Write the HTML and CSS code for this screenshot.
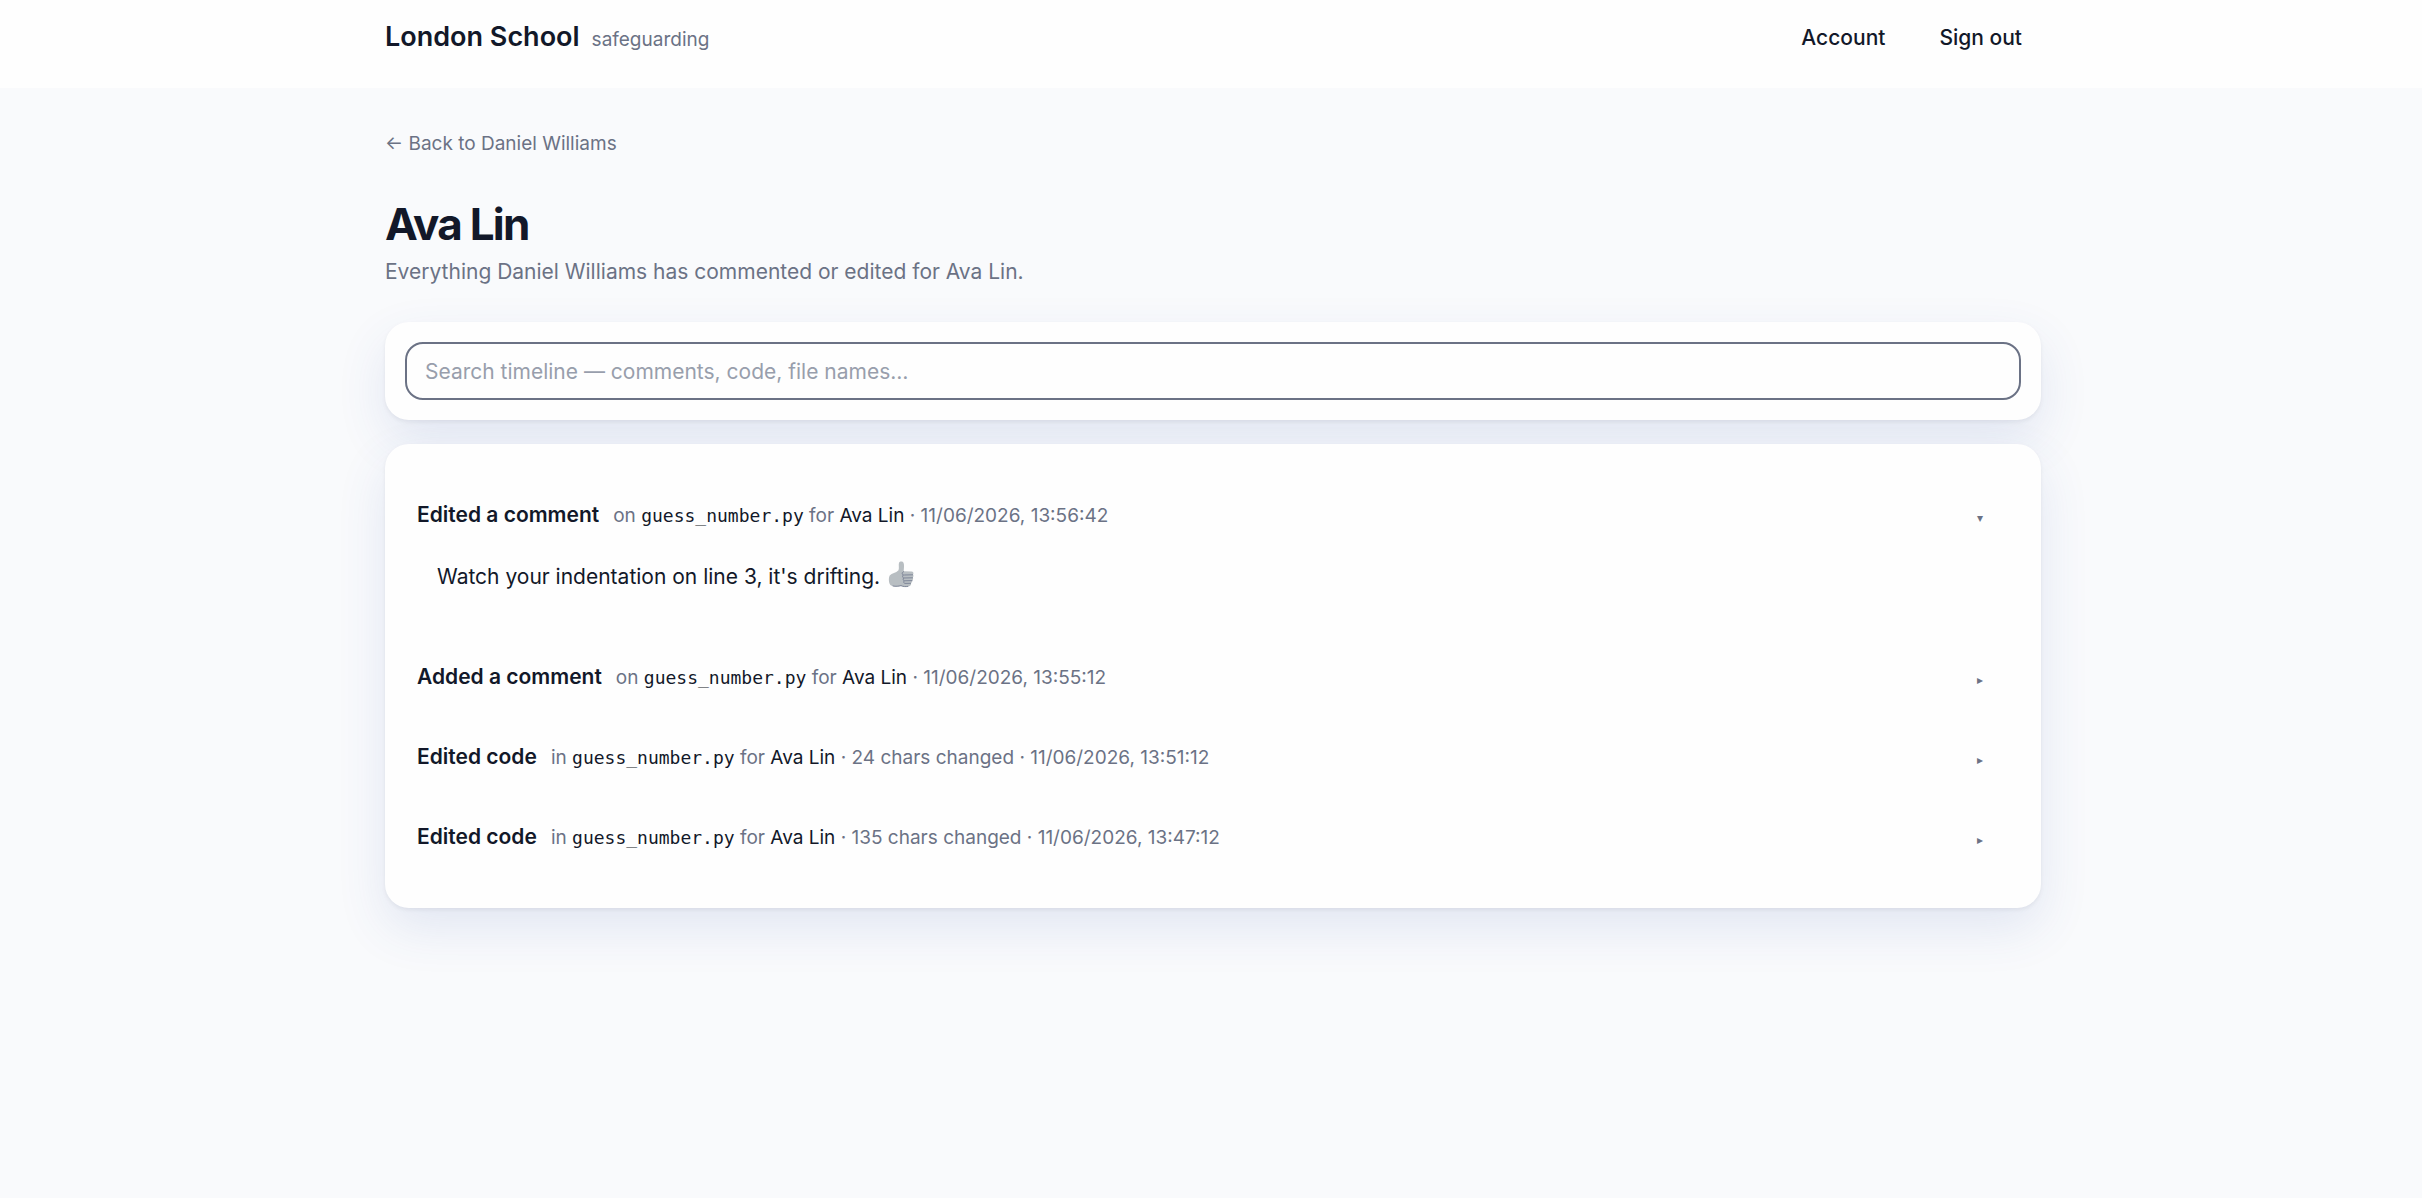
FILE: index.html
```html
<!DOCTYPE html>
<html lang="en">
<head>
  <meta charset="UTF-8" />
  <meta name="viewport" content="width=device-width, initial-scale=1.0"/>
  <title>Ava Lin - London School</title>
  <link rel="stylesheet" href="styles.css">
</head>
<body>

  <header class="topbar">
    <div class="container topbar-inner">
      <div class="brand">
        <strong class="brand-name">London School</strong>
        <span class="brand-tag">safeguarding</span>
      </div>
      <nav class="nav">
        <a href="#account">Account</a>
        <button type="button">Sign out</button>
      </nav>
    </div>
  </header>

  <main class="container">
    <a class="back" href="#back">← Back to Daniel Williams</a>
    <h1>Ava Lin</h1>
    <p class="subtitle">Everything Daniel Williams has commented or edited for Ava Lin.</p>

    <div class="card search-card">
      <input class="search" type="search" aria-label="Search timeline" placeholder="Search timeline — comments, code, file names…" />
    </div>

    <div class="card timeline">
      <details open>
        <summary>
          <span class="action">Edited a comment</span>
          <span class="meta">on <code>guess_number.py</code> for <b>Ava Lin</b> · 11/06/2026, 13:56:42</span>
        </summary>
        <p class="comment">Watch your indentation on line 3, it's drifting.
          <svg class="thumb" viewBox="0 0 26 28" role="img" aria-label="Thumbs up">
            <path fill="#b8bec2" d="M11 1.800C11.800.2 14.800.2 15.600 2c.8 2.300.3 5.300.1 8.200l8.300.2c1.500.2 1.900 2 .9 3 .8.8.8 2.300-.1 3 .6.9.4 2.300-.6 2.900.3 1.200-.2 2.200-1.100 2.600.3 1.800-.7 3.200-2.500 3.600-2.600.6-5.500.3-7.600-.6-3.500.7-7 .9-10-.3C.8 23 .2 17.500 1.700 14.500 3.800 12.300 8 12 10.500 9.300c.9-2.300-.2-5.500.5-7.500z"/>
            <path fill="none" stroke="#7f8799" stroke-width="1" stroke-linecap="round" d="M15.500 10.700c-1 .3-1.600 1.200-1.200 2.300.3.900 1.200 1 2 1l8.400-.2M15 14.200c-.8 1-.5 2.500.7 2.800l8.800-.2M15.500 17.200c-.8 1-.3 2.400.8 2.600l7.700-.2M16 20c-.8 1-.2 2.200.8 2.400l5.800-.1M5 25c3 .6 5.500.2 8-.4 2 1 4.500 1.300 6.800.8"/>
          </svg>
        </p>
      </details>
      <details>
        <summary>
          <span class="action">Added a comment</span>
          <span class="meta">on <code>guess_number.py</code> for <b>Ava Lin</b> · 11/06/2026, 13:55:12</span>
        </summary>
      </details>
      <details>
        <summary>
          <span class="action">Edited code</span>
          <span class="meta">in <code>guess_number.py</code> for <b>Ava Lin</b> · 24 chars changed · 11/06/2026, 13:51:12</span>
        </summary>
      </details>
      <details>
        <summary>
          <span class="action">Edited code</span>
          <span class="meta">in <code>guess_number.py</code> for <b>Ava Lin</b> · 135 chars changed · 11/06/2026, 13:47:12</span>
        </summary>
      </details>
    </div>
  </main>

</body>
</html>
```
FILE: styles.css
```css
* {
  box-sizing: border-box;
}

body {
  margin: 0;
  min-height: 100vh;
  font-family: Inter, sans-serif;
  font-size: 21px;
  line-height: 32px;
  background-color: #f9fafc;
  color: #121829;
}

.container {
  max-width: 1660px;
  margin: 0 auto;
  padding-left: 4px;
}

.topbar {
  background: #fefefe;
}

.topbar-inner {
  display: flex;
  justify-content: space-between;
  align-items: center;
  padding-top: 10px;
  padding-bottom: 22px;
}

.brand {
  display: flex;
  align-items: baseline;
  gap: 12px;
}

.brand-name {
  font-size: 27px;
  font-weight: 600;
}

.brand-tag {
  font-size: 19px;
  color: #6b7285;
}

.nav {
  display: flex;
  gap: 16px;
}

.nav a,
.nav button {
  padding: 12px 19px;
  border: none;
  border-radius: 20px;
  background: none;
  font: inherit;
  font-weight: 500;
  color: inherit;
  text-decoration: none;
  cursor: pointer;
}

.back {
  display: inline-block;
  margin-top: 40px;
  font-size: 19px;
  color: #6b7285;
  text-decoration: none;
}

h1 {
  margin: 36px 0 0;
  font-size: 44px;
  line-height: 56px;
  font-weight: 700;
  letter-spacing: -0.04em;
}

.subtitle {
  margin: 4px 0 34px;
  color: #6b7285;
}

.card {
  background: #fefefe;
  border-radius: 24px;
  box-shadow: 0 2px 4px rgba(18, 24, 41, 0.06), 0 20px 50px rgba(60, 90, 170, 0.12);
}

.search-card {
  margin-bottom: 24px;
  padding: 20px;
}

.search {
  display: block;
  width: 100%;
  height: 58px;
  padding: 0 18px;
  border: 2px solid #6b7285;
  border-radius: 18px;
  outline: none;
  background: #fefefe;
  font: inherit;
  color: inherit;
  appearance: none;
}

.search::placeholder {
  color: #989eac;
}

.timeline {
  padding: 31px 58px 31px 32px;
}

summary {
  display: flex;
  align-items: baseline;
  gap: 14px;
  padding: 24px 0;
  list-style: none;
  cursor: pointer;
}

summary::after {
  content: "▸";
  margin-left: auto;
  font-size: 12px;
  line-height: 1;
  color: #6b7285;
}

details[open] summary::after {
  content: "▾";
}

.action {
  font-weight: 600;
}

.meta {
  font-size: 19px;
  line-height: 24px;
  color: #6b7285;
}

.meta code {
  font-family: "DejaVu Sans Mono", monospace;
  font-size: 18px;
  line-height: 1;
  color: #121829;
}

.meta b {
  font-weight: 400;
  color: #121829;
}

.comment {
  margin: 0;
  padding: 6px 20px 44px;
}

.thumb {
  width: 26px;
  height: 28px;
  margin-left: 2px;
  vertical-align: -5px;
}
```
